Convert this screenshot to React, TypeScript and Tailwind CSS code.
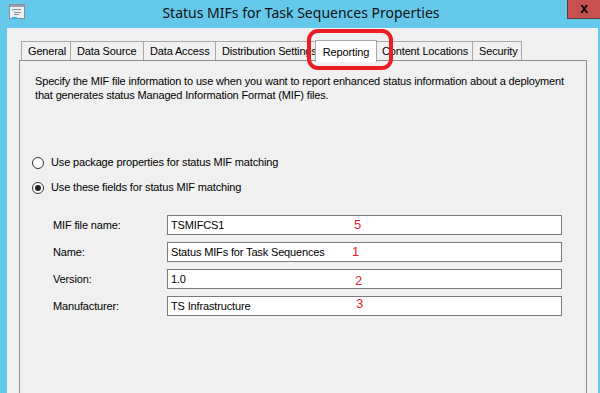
import React from 'react';

const tabs = [
  { label: 'General', w: 'w-[49px]' },
  { label: 'Data Source', w: 'w-[73px]' },
  { label: 'Data Access', w: 'w-[72px]' },
  { label: 'Distribution Settings', w: 'w-[102px]' },
  { label: 'Reporting', w: 'w-[62px]', active: true },
  { label: 'Content Locations', w: 'w-[97px]' },
  { label: 'Security', w: 'w-[50px]' },
];

const fields = [
  { label: 'MIF file name:', value: 'TSMIFCS1', mark: '5', pos: 'left-[186px] top-[1px]' },
  { label: 'Name:', value: 'Status MIFs for Task Sequences', mark: '1', pos: 'left-[184px] top-[1px]' },
  { label: 'Version:', value: '1.0', mark: '2', pos: 'left-[187px] top-[3px]' },
  { label: 'Manufacturer:', value: 'TS Infrastructure', mark: '3', pos: 'left-[188px] -top-[1px]' },
];

const Radio = ({ checked, label }: { checked?: boolean; label: string }) => (
  <div className="flex items-center h-[15px]">
    <span className="w-[12px] h-[12px] rounded-full border border-[#333] bg-white flex items-center justify-center ml-[12px]">
      {checked && <span className="w-[6px] h-[6px] rounded-full bg-[#222]" />}
    </span>
    <span className="ml-[7px]">{label}</span>
  </div>
);

export default function App() {
  return (
    <div className="w-[600px] h-[393px] bg-[#63c8ea] flex flex-col overflow-hidden font-['Liberation_Sans',sans-serif] text-[11px] tracking-[-0.15px] text-black">
      {/* Title bar */}
      <div className="h-[28px] flex items-start relative">
        <svg className="mt-[4px] ml-[9px]" width="16" height="16" viewBox="0 0 16 16">
          <rect x="0.5" y="0.5" width="15" height="14" fill="#eef0f2" stroke="#8a8f96" />
          <rect x="1" y="1" width="14" height="2" fill="#9aa0a8" />
          <rect x="3" y="5" width="1.5" height="1.5" fill="#3db0e0" />
          <rect x="5" y="5" width="7" height="1" fill="#8a8f96" />
          <rect x="5" y="8" width="7" height="1" fill="#8a8f96" />
          <rect x="5" y="10" width="5" height="1" fill="#8a8f96" />
          <rect x="3" y="13" width="5" height="2" fill="#2fb4ea" />
        </svg>
        <div className="flex-1 text-center font-['Noto_Sans',sans-serif] text-[14px] tracking-normal leading-[24px] text-[#111] mt-[1px] pl-[10px]">
          Status MIFs for Task Sequences Properties
        </div>
        <div className="w-[33px] h-[19px] bg-[#c75050] border-l border-b border-[#5a3a3a] flex items-center justify-center text-[14px] font-bold text-black leading-none pb-[2px]">
          x
        </div>
      </div>

      {/* Dialog body */}
      <div className="flex-1 ml-[7px] mr-[2px] bg-[#f0f0f0] pl-[12px] pr-[11px] pt-[13px] flex flex-col relative">
        {/* Tabs */}
        <div className="flex items-end h-[19px] ml-[2px] relative z-10">
          {tabs.map((t, i) =>
            t.active ? (
              <div
                key={t.label}
                className={`${t.w} h-[22px] -mb-[2px] -mx-[2px] px-[2px] bg-white border border-b-0 border-[#a8a8a8] flex items-start justify-center pt-[3px] relative z-20`}
              >
                {t.label}
              </div>
            ) : (
              <div
                key={t.label}
                className={`${t.w} h-[19px] bg-[#f0f0f0] border-t border-l ${i === tabs.length - 1 ? 'border-r' : ''} border-[#a8a8a8] flex items-center pl-[6px] overflow-hidden whitespace-nowrap`}
              >
                {t.label}
              </div>
            )
          )}
        </div>

        {/* Panel */}
        <div className="flex-1 border border-b-0 border-[#8d8f96] bg-[#f0f0f0] pl-[15px] pt-[13px]">
          <p className="leading-[14px]">
            Specify the MIF file information to use when you want to report enhanced status information about a deployment
            <br />
            that generates status Managed Information Format (MIF) files.
          </p>

          <div className="mt-[53px] -ml-[15px] flex flex-col gap-[10px]">
            <Radio label="Use package properties for status MIF matching" />
            <Radio checked label="Use these fields for status MIF matching" />
          </div>

          <div className="mt-[20px] flex flex-col gap-[7px]">
            {fields.map((f) => (
              <div key={f.label} className="flex items-center h-[20px]">
                <span className="w-[132px] pl-[18px]">{f.label}</span>
                <div className="w-[395px] h-[20px] bg-white border border-[#7a7a7a] pl-[3px] flex items-center relative">
                  {f.value}
                  <span className={`absolute ${f.pos} text-[13px] tracking-normal leading-[16px] text-[#e8202e]`}>{f.mark}</span>
                </div>
              </div>
            ))}
          </div>
        </div>

        {/* Red highlight ring around the Reporting tab */}
        <div className="absolute left-[300px] top-[1px] w-[86px] h-[41px] border-[4px] border-[#ea1c24] rounded-[11px] pointer-events-none z-30" />
      </div>
    </div>
  );
}
